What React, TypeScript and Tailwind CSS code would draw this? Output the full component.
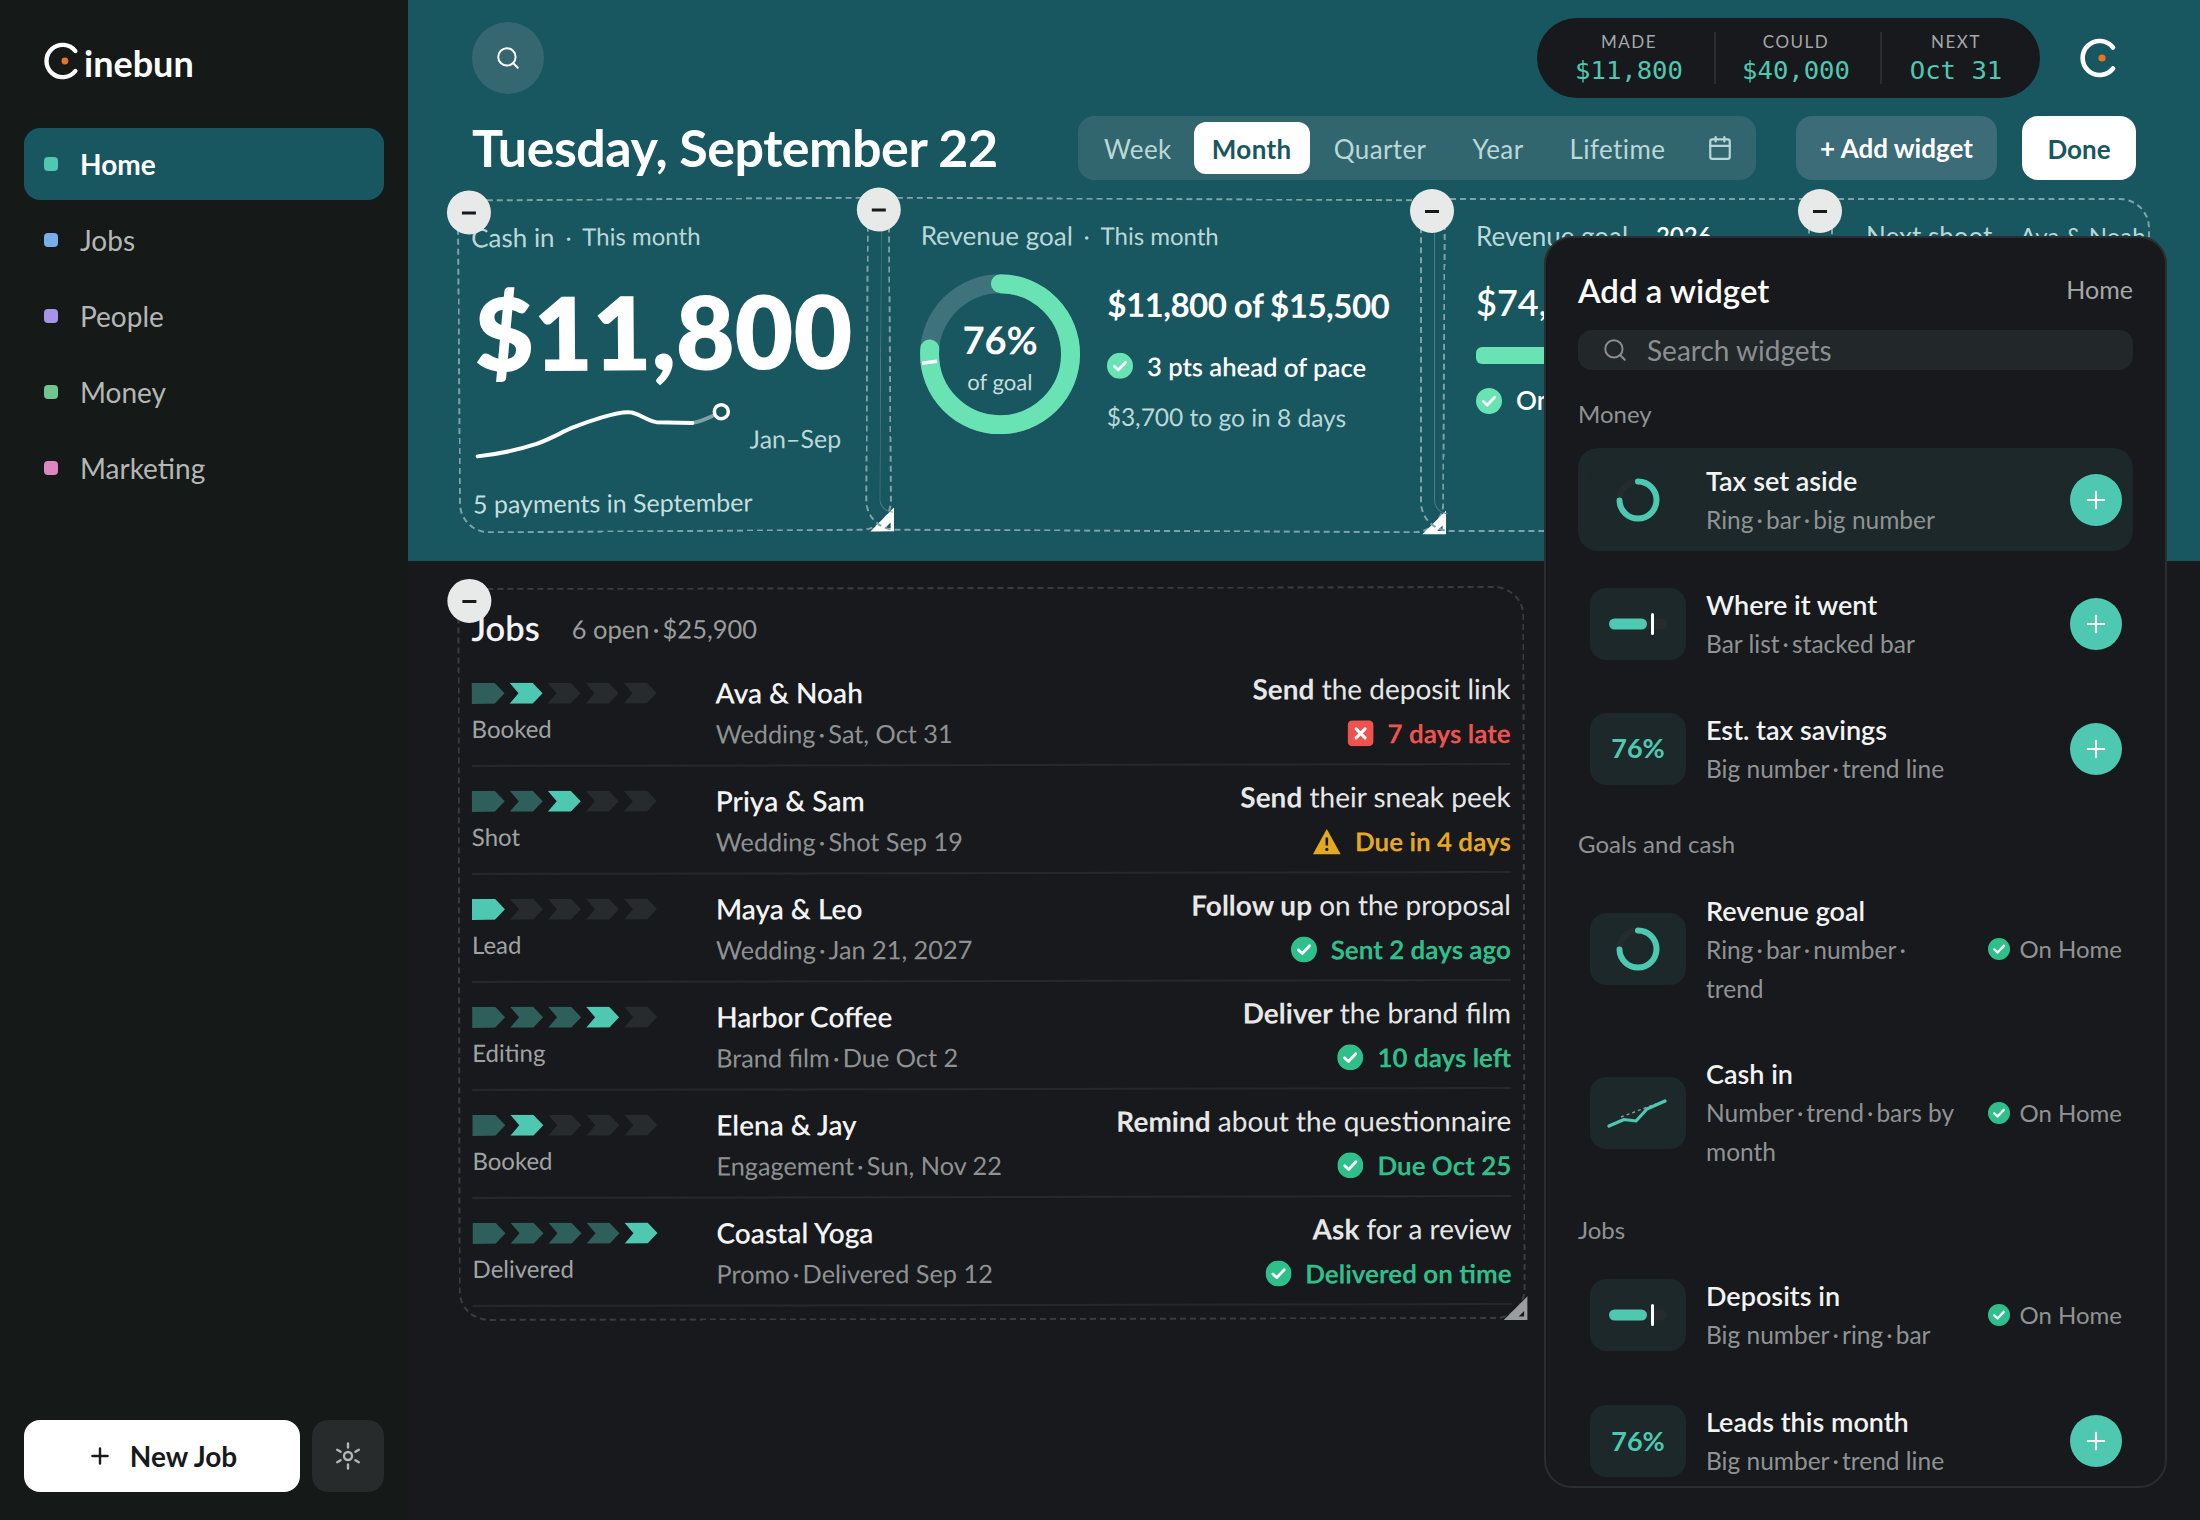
import { Calendar, Plus, Search } from "lucide-react";
import type { ReactNode } from "react";

const navItems = [
  { label: "Home", dot: "bg-[#4fc8b2]", active: true },
  { label: "Jobs", dot: "bg-[#78aeea]" },
  { label: "People", dot: "bg-[#a793e8]" },
  { label: "Money", dot: "bg-[#6fc78f]" },
  { label: "Marketing", dot: "bg-[#de86bf]" },
];

const jobs = [
  { stage: 1, label: "Booked", name: "Ava & Noah", sub: "Wedding\u2009·\u2009Sat, Oct 31", verb: "Send", rest: " the deposit link", status: "7 days late", tone: "late" },
  { stage: 2, label: "Shot", name: "Priya & Sam", sub: "Wedding\u2009·\u2009Shot Sep 19", verb: "Send", rest: " their sneak peek", status: "Due in 4 days", tone: "warn" },
  { stage: 0, label: "Lead", name: "Maya & Leo", sub: "Wedding\u2009·\u2009Jan 21, 2027", verb: "Follow up", rest: " on the proposal", status: "Sent 2 days ago", tone: "ok" },
  { stage: 3, label: "Editing", name: "Harbor Coffee", sub: "Brand film\u2009·\u2009Due Oct 2", verb: "Deliver", rest: " the brand film", status: "10 days left", tone: "ok" },
  { stage: 1, label: "Booked", name: "Elena & Jay", sub: "Engagement\u2009·\u2009Sun, Nov 22", verb: "Remind", rest: " about the questionnaire", status: "Due Oct 25", tone: "ok" },
  { stage: 4, label: "Delivered", name: "Coastal Yoga", sub: "Promo\u2009·\u2009Delivered Sep 12", verb: "Ask", rest: " for a review", status: "Delivered on time", tone: "ok" },
];

function LogoMark({ size, dot }: { size: number; dot: number }) {
  return (
    <svg width={size} height={size} viewBox="0 0 40 40" fill="none">
      <path d="M33 9.5A17 17 0 1 0 33 30.5" stroke="#fff" strokeWidth="4.6" strokeLinecap="round" />
      <circle cx="22" cy="20" r={dot} fill="#e8742a" />
    </svg>
  );
}

function CheckDot({ size, color, tick = "#fff" }: { size: number; color: string; tick?: string }) {
  return (
    <svg width={size} height={size} viewBox="0 0 24 24" className="shrink-0">
      <circle cx="12" cy="12" r="12" fill={color} />
      <path d="M6.8 12.4l3.6 3.4 6.8-7.2" fill="none" stroke={tick} strokeWidth="2.6" strokeLinecap="round" strokeLinejoin="round" />
    </svg>
  );
}

function StatusIcon({ tone }: { tone: string }) {
  if (tone === "late") {
    return (
      <svg width="26" height="26" viewBox="0 0 26 26" className="shrink-0">
        <rect width="26" height="26" rx="5" fill="#ef5350" />
        <path d="M8.5 8.5l9 9M17.5 8.5l-9 9" stroke="#fff" strokeWidth="3" strokeLinecap="round" />
      </svg>
    );
  }
  if (tone === "warn") {
    return (
      <svg width="28" height="26" viewBox="0 0 28 26" className="shrink-0">
        <path d="M14 0.5L28 26H0Z" fill="#e5a823" />
        <path d="M14 9v8" stroke="#18191c" strokeWidth="2.6" />
        <circle cx="14" cy="21" r="1.6" fill="#18191c" />
      </svg>
    );
  }
  return <CheckDot size={26} color="#2fbf8b" />;
}

function StageChevrons({ stage }: { stage: number }) {
  return (
    <svg width="186" height="21" viewBox="0 0 186 21" className="block">
      {[0, 1, 2, 3, 4].map((i) => {
        const fill = i === stage ? "#4fc8b2" : i < stage ? "#2f5f5b" : "#272b2e";
        const x = i * 38;
        const d = i === 0
          ? `M${x} 0H${x + 23}L${x + 33} 10.5L${x + 23} 21H${x}Z`
          : `M${x} 0H${x + 23}L${x + 33} 10.5L${x + 23} 21H${x}L${x + 9} 10.5Z`;
        return <path key={i} d={d} fill={fill} />;
      })}
    </svg>
  );
}

function MinusButton() {
  return (
    <div className="absolute -left-[12px] -top-[11px] z-20 flex h-[44px] w-[44px] items-center justify-center rounded-full bg-[#e8e9e9]">
      <div className="h-[3px] w-[14px] bg-[#18191c]" />
    </div>
  );
}

function ResizeHandle({ color = "#fff" }: { color?: string }) {
  return (
    <svg width="24" height="24" viewBox="0 0 24 24" className="absolute -bottom-[3px] -right-[4px] z-10">
      <path d="M0 24L24 0V24ZM15 20.5H20.5V15Z" fill={color} fillRule="evenodd" />
    </svg>
  );
}

function Widget({ className, children, line }: { className: string; children: ReactNode; line?: boolean }) {
  return (
    <div className={`relative h-[334px] shrink-0 rounded-[30px] border-2 border-dashed border-[#7ea3a8] pt-[21px] ${className}`}>
      <MinusButton />
      {line && <div className="absolute left-[12px] top-[26px] bottom-[16px] w-[14px] rounded-bl-[14px] border-b border-l border-[#4c7d85]" />}
      {children}
      <ResizeHandle />
    </div>
  );
}

function WidgetLabel({ title, note, noteClass = "" }: { title: string; note: string; noteClass?: string }) {
  return (
    <div className="flex h-[30px] items-center whitespace-nowrap text-[#b9d8d8]">
      <span className="text-[26px]">{title}</span>
      <span className="mx-[11px] text-[22px]">·</span>
      <span className={`text-[24px] ${noteClass}`}>{note}</span>
    </div>
  );
}

function RevenueRing() {
  const r = 70.5;
  const c = 2 * Math.PI * r;
  return (
    <svg width="160" height="160" viewBox="0 0 160 160" className="block">
      <circle cx="80" cy="80" r={r} fill="none" stroke="#3f737c" strokeWidth="19" />
      <circle cx="80" cy="80" r={r} fill="none" stroke="#6ae3b4" strokeWidth="19" strokeLinecap="round" strokeDasharray={`${c * 0.76} ${c}`} transform="rotate(-90 80 80)" />
      <path d="M2 89.5L17 87.5" stroke="#fff" strokeWidth="3.5" fill="none" />
    </svg>
  );
}

function MiniRing() {
  const r = 18.5;
  const c = 2 * Math.PI * r;
  return (
    <svg width="44" height="44" viewBox="0 0 44 44">
      <circle cx="22" cy="22" r={r} fill="none" stroke="#262b2d" strokeWidth="6" />
      <circle cx="22" cy="22" r={r} fill="none" stroke="#4fc8b2" strokeWidth="6" strokeLinecap="round" strokeDasharray={`${c * 0.74} ${c}`} transform="rotate(-90 22 22)" />
    </svg>
  );
}

function MiniBar() {
  return (
    <svg width="58" height="22" viewBox="0 0 58 22">
      <rect x="36" y="5.5" width="22" height="11" rx="5.5" fill="#262b2d" />
      <rect x="0" y="5.5" width="38" height="11" rx="5.5" fill="#4fc8b2" />
      <rect x="42" y="0" width="3" height="22" rx="1.5" fill="#fff" />
    </svg>
  );
}

function MiniTrend() {
  return (
    <svg width="62" height="30" viewBox="0 0 62 30" fill="none">
      <path d="M14 19L38 10L57 3" stroke="#8d9a9a" strokeWidth="1.4" strokeDasharray="3 3" />
      <path d="M2 28L17 21.5L29 23L40 11L58 3" stroke="#4fc8b2" strokeWidth="3.2" strokeLinecap="round" strokeLinejoin="round" />
    </svg>
  );
}

function MiniPercent() {
  return <span className="text-[27px] font-bold text-[#4fc8b2]">76%</span>;
}

function AddButton() {
  return (
    <div className="flex h-[52px] w-[52px] shrink-0 items-center justify-center rounded-full bg-[#4fc8b2]">
      <Plus size={28} strokeWidth={1.8} color="#fff" />
    </div>
  );
}

function OnHome() {
  return (
    <div className="flex shrink-0 items-center gap-[10px] text-[24px] text-[#8f9393]">
      <CheckDot size={22} color="#2fbf8b" />
      <span>On Home</span>
    </div>
  );
}

function WidgetRow({ icon, title, lines, onHome, highlight }: { icon: ReactNode; title: string; lines: string[]; onHome?: boolean; highlight?: boolean }) {
  return (
    <div className={`flex items-center rounded-[20px] py-[12.5px] pl-[12px] pr-[11px] ${highlight ? "bg-[#1c2829]" : ""}`}>
      <div className="flex h-[72px] w-[96px] shrink-0 items-center justify-center rounded-[16px] bg-[#1c2829]">{icon}</div>
      <div className="ml-[20px] min-w-0 flex-1">
        <div className="text-[27px] font-semibold leading-[39px] text-[#f2f3f3]">{title}</div>
        {lines.map((l) => (
          <div key={l} className="text-[24.5px] leading-[39px] text-[#8f9393]">{l}</div>
        ))}
      </div>
      {onHome ? <OnHome /> : <AddButton />}
    </div>
  );
}

function SectionLabel({ children, className }: { children: ReactNode; className: string }) {
  return <div className={`text-[24px] leading-[30px] text-[#8f9393] ${className}`}>{children}</div>;
}

function AddWidgetPanel() {
  return (
    <div className="absolute left-[1544px] top-[236px] z-30 h-[1252px] w-[623px] overflow-hidden rounded-[28px] border-2 border-[#2a2e31] bg-[#18191c] px-[32px] pt-[32px]">
      <div className="flex items-center justify-between">
        <span className="text-[33px] font-semibold leading-[40px] text-white">Add a widget</span>
        <span className="text-[25px] text-[#a5a8a8]">Home</span>
      </div>
      <div className="mt-[20px] flex h-[40px] items-center rounded-[14px] bg-[#22272a] pl-[24px] text-[28px] text-[#8b8f90]">
        <Search size={26} strokeWidth={1.8} />
        <span className="ml-[19px]">Search widgets</span>
      </div>
      <SectionLabel className="mt-[29px] mb-[19px]">Money</SectionLabel>
      <div className="flex flex-col gap-[21.5px]">
        <WidgetRow highlight icon={<MiniRing />} title="Tax set aside" lines={["Ring\u2009·\u2009bar\u2009·\u2009big number"]} />
        <WidgetRow icon={<MiniBar />} title="Where it went" lines={["Bar list\u2009·\u2009stacked bar"]} />
        <WidgetRow icon={<MiniPercent />} title="Est. tax savings" lines={["Big number\u2009·\u2009trend line"]} />
      </div>
      <SectionLabel className="mt-[28.5px] mb-[19.5px]">Goals and cash</SectionLabel>
      <div className="flex flex-col gap-[21.5px]">
        <WidgetRow onHome icon={<MiniRing />} title="Revenue goal" lines={["Ring\u2009·\u2009bar\u2009·\u2009number\u2009·", "trend"]} />
        <WidgetRow onHome icon={<MiniTrend />} title="Cash in" lines={["Number\u2009·\u2009trend\u2009·\u2009bars by", "month"]} />
      </div>
      <SectionLabel className="mt-[31px] mb-[18.5px]">Jobs</SectionLabel>
      <div className="flex flex-col gap-[23.5px]">
        <WidgetRow onHome icon={<MiniBar />} title="Deposits in" lines={["Big number\u2009·\u2009ring\u2009·\u2009bar"]} />
        <WidgetRow icon={<MiniPercent />} title="Leads this month" lines={["Big number\u2009·\u2009trend line"]} />
      </div>
    </div>
  );
}

function Sidebar() {
  return (
    <aside className="flex h-full w-[408px] shrink-0 flex-col bg-[#151918] px-[24px]">
      <div className="flex h-[128px] items-start pl-[20px] pt-[42px]">
        <LogoMark size={38} dot={3.6} />
        <span className="-mt-[3px] ml-[2px] text-[36px] font-bold leading-[48px] text-white">inebun</span>
      </div>
      <nav className="flex flex-col gap-[4px]">
        {navItems.map((item) => (
          <div key={item.label} className={`flex h-[72px] items-center rounded-[16px] pl-[20px] ${item.active ? "bg-[#185660]" : ""}`}>
            <div className={`h-[14px] w-[14px] rounded-[4px] ${item.dot}`} />
            <span className={`ml-[22px] text-[28px] ${item.active ? "font-bold text-white" : "text-[#b4b7b6]"}`}>{item.label}</span>
          </div>
        ))}
      </nav>
      <div className="mt-auto mb-[28px] flex gap-[12px]">
        <div className="flex h-[72px] flex-1 items-center justify-center gap-[17px] rounded-[16px] bg-white text-[28px] font-bold text-[#18191c]">
          <Plus size={26} strokeWidth={2.2} />
          <span>New Job</span>
        </div>
        <div className="flex h-[72px] w-[72px] items-center justify-center rounded-[16px] bg-[#272b2b]">
          <svg width="28" height="28" viewBox="0 0 28 28" fill="none" stroke="#b4b7b6" strokeWidth="2.4" strokeLinecap="round">
            <circle cx="14" cy="14" r="4" />
            <path d="M14 1.5v4M14 22.5v4M3.2 7.8l3.4 2M21.4 18.2l3.4 2M3.2 20.2l3.4-2M21.4 9.8l3.4-2" />
          </svg>
        </div>
      </div>
    </aside>
  );
}

function Stat({ label, value, className }: { label: string; value: string; className: string }) {
  return (
    <div className={`flex flex-col items-center ${className}`}>
      <span className="text-[17px] leading-[22px] tracking-[1.5px] text-[#a5a8a8]">{label}</span>
      <span className="mt-[1px] font-['DejaVu_Sans_Mono',monospace] text-[25.6px] leading-[32px] text-[#4fc8b2]">{value}</span>
    </div>
  );
}

function Header() {
  return (
    <header className="h-[561px] shrink-0 bg-[#185660] pt-[18px]">
      <div className="flex h-[80px] items-center pl-[64px] pr-[99px]">
        <div className="flex h-[72px] w-[72px] items-center justify-center rounded-full bg-[#34676f] text-white">
          <Search size={26} strokeWidth={1.8} />
        </div>
        <div className="ml-auto flex h-[80px] items-center rounded-full bg-[#18191c] pl-[30px] pr-[34px]">
          <Stat label="MADE" value="$11,800" className="w-[124px]" />
          <div className="ml-[23px] h-[52px] w-[2px] bg-[#2a2d30]" />
          <Stat label="COULD" value="$40,000" className="ml-[23px] w-[114px]" />
          <div className="ml-[27px] h-[52px] w-[2px] bg-[#2a2d30]" />
          <Stat label="NEXT" value="Oct 31" className="ml-[24px] w-[100px]" />
        </div>
        <div className="ml-[40px] mr-[-19px]">
          <LogoMark size={40} dot={3.6} />
        </div>
      </div>
      <div className="mt-[18px] flex h-[64px] items-center pl-[64px]">
        <h1 className="-mt-[2px] text-[52px] font-bold leading-[64px] tracking-[-0.5px] text-white">Tuesday, September 22</h1>
        <div className="ml-auto flex h-[64px] w-[678px] items-center rounded-[16px] bg-[#32666f] pl-[6px] text-[26px] tracking-[0.4px] text-[#b9d8d8]">
          <span className="ml-[20px] mt-[2px]">Week</span>
          <span className="ml-[22px] flex h-[52px] w-[116px] items-center justify-center rounded-[12px] bg-white pt-[2px] font-bold text-[#185660]">Month</span>
          <span className="ml-[24px] mt-[2px]">Quarter</span>
          <span className="ml-[46px] mt-[2px]">Year</span>
          <span className="ml-[46px] mt-[2px]">Lifetime</span>
          <Calendar size={26} strokeWidth={2} className="ml-[42px]" />
        </div>
        <div className="ml-[40px] flex h-[64px] w-[201px] items-center justify-center rounded-[16px] bg-[#3b6c77] pt-[1px] text-[26px] font-bold text-white">+ Add widget</div>
        <div className="ml-[25px] mr-[64px] flex h-[64px] w-[114px] items-center justify-center rounded-[16px] bg-white pt-[2px] text-[26px] font-bold text-[#185660]">Done</div>
      </div>
      <div className="mt-[18px] flex pl-[50px]">
        <Widget className="w-[433px] rotate-[-0.4deg] pl-[12px]">
          <WidgetLabel title="Cash in" note="This month" />
          <div className="mt-[30px] pl-[3px] text-[101.5px] font-extrabold leading-[100px] text-white">$11,800</div>
          <div className="mt-[20px] flex h-[60px]">
            <svg width="262" height="60" viewBox="0 0 262 60" fill="none" className="shrink-0">
              <path d="M5 54C25 52 45 48 64 42C78 37 90 30 100 26C115 20 145 10 157 11C165 11 175 20 184 21L220 22" stroke="#fff" strokeWidth="4" strokeLinecap="round" />
              <path d="M220 22C228 21 236 17 243 14" stroke="#fff" strokeOpacity="0.45" strokeWidth="4" />
              <circle cx="249" cy="11" r="7" fill="#185660" stroke="#fff" strokeWidth="3.5" />
            </svg>
            <span className="ml-[15px] mt-[23px] text-[25px] leading-[30px] text-[#b9d8d8]">Jan–Sep</span>
          </div>
          <div className="mt-[26px] text-[25px] leading-[30px] text-[#c5dede]">5 payments in September</div>
        </Widget>
        <Widget line className="-ml-[25px] w-[579px] rotate-[0.3deg] pl-[52px]">
          <WidgetLabel title="Revenue goal" note="This month" />
          <div className="mt-[24px] flex">
            <div className="relative h-[160px] w-[160px] shrink-0">
              <RevenueRing />
              <div className="absolute inset-0 flex flex-col items-center pt-[42px]">
                <span className="text-[38px] font-bold leading-[46px] text-white">76%</span>
                <span className="mt-[6px] text-[22px] leading-[28px] text-[#c5dede]">of goal</span>
              </div>
            </div>
            <div className="ml-[27px] pt-[6px]">
              <div className="text-[33px] font-bold leading-[46px] tracking-[-0.5px] text-white">$11,800 of $15,500</div>
              <div className="mt-[21px] flex h-[36px] items-center gap-[14px]">
                <CheckDot size={26} color="#6ae3b4" />
                <span className="text-[25.6px] font-semibold text-white">3 pts ahead of pace</span>
              </div>
              <div className="mt-[15px] text-[24.5px] leading-[36px] text-[#b9d8d8]">$3,700 to go in 8 days</div>
            </div>
          </div>
        </Widget>
        <Widget line className="-ml-[25px] w-[413px] pl-[54px]">
          <WidgetLabel title="Revenue goal" note="2026" noteClass="font-semibold text-white" />
          <div className="mt-[28px] text-[36px] font-semibold leading-[46px] text-white">$74,800</div>
          <div className="mt-[22px] h-[17px] w-[300px] rounded-[6px] bg-[#6ae3b4]" />
          <div className="mt-[17px] flex items-center gap-[14px]">
            <CheckDot size={26} color="#6ae3b4" />
            <span className="text-[26px] font-semibold text-white">On track</span>
          </div>
        </Widget>
        <Widget className="-ml-[25px] w-[342px] pl-[56px]">
          <WidgetLabel title="Next shoot" note="Ava & Noah" />
        </Widget>
      </div>
    </header>
  );
}

function JobsWidget() {
  return (
    <section className="relative ml-[50px] mt-[26px] h-[733px] w-[1067px] rotate-[-0.1deg] rounded-[30px] border-2 border-dashed border-[#3a3d40] px-[12px]">
      <MinusButton />
      <div className="flex h-[69px] items-center pt-[10px]">
        <span className="-mt-[3px] text-[34.5px] font-semibold text-[#f2f3f3]">Jobs</span>
        <span className="ml-[32px] text-[25.5px] text-[#9a9d9d]">6 open{"\u2009·\u2009"}$25,900</span>
      </div>
      {jobs.map((job) => (
        <div key={job.name} className="flex h-[108px] border-b-2 border-[#26292c] pt-[14px]">
          <div className="w-[244px] shrink-0 pt-[10px]">
            <StageChevrons stage={job.stage} />
            <div className="mt-[10px] text-[24px] leading-[30px] text-[#a0a4a4]">{job.label}</div>
          </div>
          <div className="min-w-0 flex-1">
            <div className="text-[28px] font-semibold leading-[40px] text-[#f2f3f3]">{job.name}</div>
            <div className="mt-[1px] text-[25.3px] leading-[40px] text-[#8e9292]">{job.sub}</div>
          </div>
          <div className="-mt-[3px] flex flex-col items-end">
            <div className="text-[28px] leading-[40px] text-[#e6e7e7]">
              <span className="font-bold">{job.verb}</span>
              {job.rest}
            </div>
            <div className={`mt-[5px] flex h-[40px] items-center gap-[14px] text-[26px] font-bold ${job.tone === "late" ? "text-[#ef5350]" : job.tone === "warn" ? "text-[#e5a823]" : "text-[#2fbf8b]"}`}>
              <StatusIcon tone={job.tone} />
              <span>{job.status}</span>
            </div>
          </div>
        </div>
      ))}
      <ResizeHandle color="#9a9d9d" />
    </section>
  );
}

export default function App() {
  return (
    <div className="relative flex h-[1520px] w-[2200px] overflow-hidden bg-[#18191c] font-['Lato',sans-serif]">
      <Sidebar />
      <main className="flex min-w-0 flex-1 flex-col">
        <Header />
        <JobsWidget />
      </main>
      <AddWidgetPanel />
    </div>
  );
}
